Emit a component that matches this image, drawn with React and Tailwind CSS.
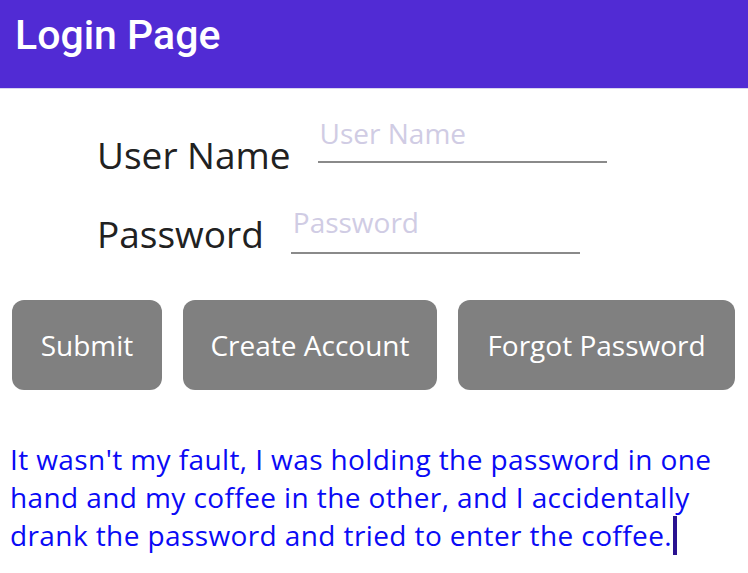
export default function App() {
  return (
    <div className="w-[748px] h-[573px] bg-white overflow-hidden" style={{ fontFamily: '"Open Sans", sans-serif' }}>
      <div className="h-[89px] bg-[#512bd4] border-b border-[#d8d4f0] flex items-start px-[15px] pt-[15px]">
        <span className="text-white text-[41px] font-medium leading-none" style={{ fontFamily: 'Roboto, sans-serif' }}>Login Page</span>
      </div>
      <div className="pl-[97px] pt-[25px] flex flex-col gap-[23px]">
        <div className="flex items-start gap-[27px]">
          <span className="mt-[16px] text-[37px] leading-[50px] text-[#212121]">User Name</span>
          <div className="w-[289px] border-b-2 border-[#8a8a8a] h-[49px]">
            <span className="block text-[28px] leading-[38px] text-[#d0cce4] pl-[2px]">User Name</span>
          </div>
        </div>
        <div className="flex items-start gap-[27px]">
          <span className="mt-[6px] text-[37px] leading-[50px] text-[#212121]">Password</span>
          <div className="w-[289px] border-b-2 border-[#8a8a8a] h-[51px]">
            <span className="block text-[28px] leading-[38px] text-[#d0cce4] pl-[2px]">Password</span>
          </div>
        </div>
      </div>
      <div className="flex px-[12px] gap-[21px] mt-[41px]">
        <button className="w-[150px] h-[90px] rounded-[12px] bg-[#808080] text-white text-[28px]">Submit</button>
        <button className="w-[254px] h-[90px] rounded-[12px] bg-[#808080] text-white text-[28px]">Create Account</button>
        <button className="w-[277px] h-[90px] rounded-[12px] bg-[#808080] text-white text-[28px]">Forgot Password</button>
      </div>
      <p className="mt-[50px] px-[10px] text-[28px] leading-[38px] tracking-[0.4px] text-[#0a0af5]">
        It wasn't my fault, I was holding the password in one hand and my coffee in the other, and I accidentally drank the password and tried to enter the coffee.<span className="inline-block w-[4px] h-[39px] bg-[#2a1290] align-top ml-[1px]"></span>
      </p>
    </div>
  );
}
